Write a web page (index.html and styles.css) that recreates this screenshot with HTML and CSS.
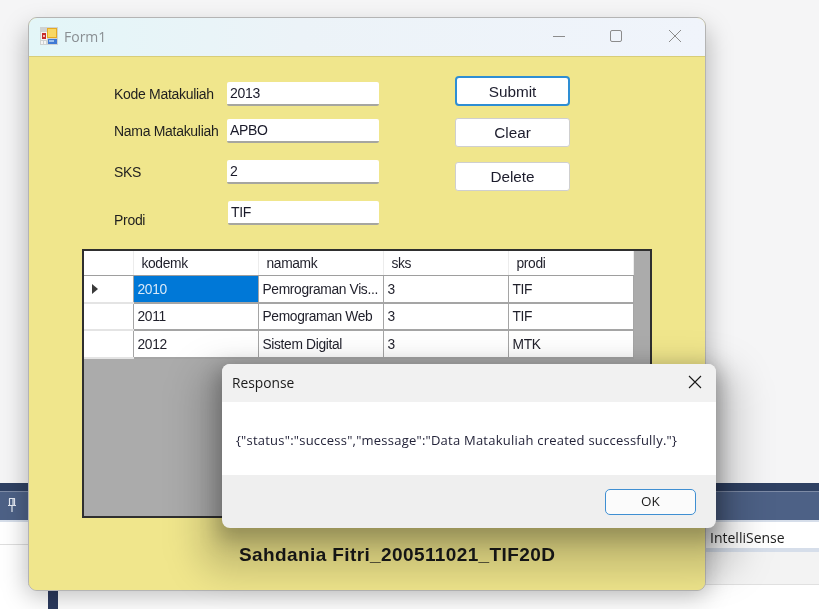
FILE: index.html
```html
<!DOCTYPE html>
<html lang="en">
<head>
<meta charset="utf-8">
<title>Form1</title>
<link rel="stylesheet" href="styles.css">
</head>
<body>
<div class="desktop">
  <div class="ide">
    <div class="ide-band ide-band-top"></div>
    <div class="ide-band ide-band-main">
      <svg class="pin" width="12" height="16" viewBox="0 0 12 16"><path d="M3 1.5h6M3.5 1.5v7h5v-7M2 8.5h8M6 8.5v6.5M7 2v6" fill="none" stroke="#e4e9f2" stroke-width="1.2"/></svg>
    </div>
    <div class="ide-tabs"><span class="ide-tab-label">IntelliSense</span></div>
    <div class="ide-strip"></div>
    <div class="ide-lower"></div>
    <div class="ide-rule"></div>
    <div class="ide-bar"></div>
  </div>

  <div class="form-shadow"></div>
  <section class="form-window">
    <header class="titlebar">
      <svg class="app-icon" width="18" height="18" viewBox="0 0 18 18">
        <rect x="0" y="0" width="18" height="18" fill="#cfd2d2"/>
        <rect x="1" y="5" width="6" height="8" fill="#f2f2f2"/>
        <rect x="2" y="6" width="4" height="6" fill="#c62b2b"/>
        <rect x="3" y="8" width="2" height="2" fill="#f4b5b0"/>
        <rect x="7" y="1" width="10" height="10" fill="#e5aa22"/>
        <rect x="8" y="2" width="8" height="8" fill="#f8d764"/>
        <rect x="8" y="12" width="9" height="5" fill="#3f79d4"/>
        <rect x="9" y="13" width="5" height="2" fill="#9dc0ee"/>
        <rect x="1" y="14" width="2" height="3" fill="#f5f5f5"/>
        <rect x="4" y="14" width="2" height="3" fill="#f5f5f5"/>
      </svg>
      <span class="title-text">Form1</span>
      <div class="win-controls">
        <svg class="win-btn" width="14" height="14" viewBox="0 0 14 14"><path d="M1 7.5h12" stroke="#8c8c8c" stroke-width="1"/></svg>
        <svg class="win-btn" width="14" height="14" viewBox="0 0 14 14"><rect x="0.5" y="1.5" width="11" height="11" rx="1.5" fill="none" stroke="#8c8c8c" stroke-width="1"/></svg>
        <svg class="win-btn" width="14" height="14" viewBox="0 0 14 14"><path d="M1 1l12 12M13 1L1 13" stroke="#8c8c8c" stroke-width="1"/></svg>
      </div>
    </header>

    <div class="form-body">
      <div class="form-top">
        <div class="fields">
          <div class="field field-kode"><label class="field-label">Kode Matakuliah</label><div class="input">2013</div></div>
          <div class="field field-nama"><label class="field-label">Nama Matakuliah</label><div class="input">APBO</div></div>
          <div class="field field-sks"><label class="field-label">SKS</label><div class="input">2</div></div>
          <div class="field field-prodi"><label class="field-label label-low">Prodi</label><div class="input input-inset">TIF</div></div>
        </div>
        <div class="actions">
          <div class="btn btn-focus">Submit</div>
          <div class="btn btn-clear">Clear</div>
          <div class="btn btn-delete">Delete</div>
        </div>
      </div>

      <div class="grid-view">
        <table class="data">
          <colgroup><col class="c-head"><col class="c-col"><col class="c-col"><col class="c-col"><col class="c-col"></colgroup>
          <thead>
            <tr><th></th><th>kodemk</th><th>namamk</th><th>sks</th><th>prodi</th></tr>
          </thead>
          <tbody>
            <tr><td class="row-head"><span class="row-arrow"></span></td><td class="selected">2010</td><td>Pemrograman Vis...</td><td>3</td><td>TIF</td></tr>
            <tr><td class="row-head"></td><td>2011</td><td>Pemograman Web</td><td>3</td><td>TIF</td></tr>
            <tr><td class="row-head"></td><td>2012</td><td>Sistem Digital</td><td>3</td><td>MTK</td></tr>
          </tbody>
        </table>
      </div>

      <p class="signature">Sahdania Fitri_200511021_TIF20D</p>
    </div>
  </section>

  <div class="shadow-near"></div>
  <div class="shadow-far"></div>
  <section class="dialog">
    <header class="dialog-head">
      <span class="dialog-title">Response</span>
      <svg class="dialog-close" width="14" height="14" viewBox="0 0 14 14"><path d="M1 1l12 12M13 1L1 13" stroke="#1a1a1a" stroke-width="1.1"/></svg>
    </header>
    <div class="dialog-content">{"status":"success","message":"Data Matakuliah created successfully."}</div>
    <footer class="dialog-foot"><div class="ok-btn">OK</div></footer>
  </section>
</div>
</body>
</html>
```
FILE: styles.css
```css
* { box-sizing: border-box; }
html, body { margin: 0; padding: 0; }
body { width: 819px; height: 609px; overflow: hidden; background: #f5f5f6; font-family: "Liberation Sans", Arial, sans-serif; }
.desktop { position: relative; width: 819px; height: 609px; overflow: hidden; background: #f5f5f6; filter: blur(0.3px); }

/* window behind */
.ide { position: absolute; left: 0; top: 483px; width: 819px; height: 126px; background: #ffffff; }
.ide-band { position: relative; }
.ide-band-top { height: 9px; background: #2f4163; border-bottom: 1px solid #7d8ba6; }
.ide-band-main { height: 28px; background: #4d6186; }
.pin { position: absolute; left: 6px; top: 5px; }
.ide-tabs { height: 28px; padding-top: 3px; padding-left: 710px; background: #ffffff; border-top: 2px solid #d6deea; font: 14px/26px "Open Sans", "Noto Sans", sans-serif; color: #1e1e1e; }
.ide-tab-label { display: block; font-size: 14px; }
.ide-strip { height: 4px; margin-left: 28px; background: #d6deea; }
.ide-lower { height: 33px; margin-left: 28px; background: #f3f3f3; border-bottom: 1px solid #e0e0e0; }
.ide-rule { position: absolute; left: 0; top: 61px; width: 28px; height: 1px; background: #dedede; }
.ide-bar { position: absolute; left: 48px; top: 107px; width: 10px; height: 19px; background: #2b3a5e; }

/* soft shadows */
.form-shadow { position: absolute; left: 26px; top: 28px; width: 682px; height: 568px; border-radius: 12px; background: rgba(0,0,0,.26); filter: blur(12px); }
.shadow-near { position: absolute; left: 218px; top: 368px; width: 502px; height: 172px; border-radius: 10px; background: rgba(0,0,0,.24); filter: blur(10px); }
.shadow-far { position: absolute; left: 200px; top: 368px; width: 538px; height: 204px; border-radius: 24px; background: rgba(0,0,0,.18); filter: blur(18px); }

/* form window */
.form-window { position: absolute; left: 28px; top: 17px; width: 678px; height: 574px; border: 1px solid #b4b4b4; border-radius: 9px; background: #f0e68c; }
.titlebar { display: flex; align-items: center; height: 39px; padding: 0 23px 2px 11px; border-radius: 8px 8px 0 0; background: linear-gradient(90deg, #e3f6f8 0%, #ecf3f8 40%, #f0f4fb 100%); border-bottom: 1px solid #d8cd78; }
.app-icon { flex: none; margin-right: 6px; }
.title-text { font: 14px "Open Sans", "Noto Sans", sans-serif; color: #8a8f93; }
.win-controls { display: flex; gap: 44px; margin-left: auto; }
.win-btn { display: block; }

.form-body { height: 533px; border-radius: 0 0 8px 8px; background: #f0e68c; overflow: hidden; }
.form-top { display: flex; height: 192px; }
.fields { width: 341px; margin-left: 85px; padding-top: 25px; flex: none; }
.field { display: flex; align-items: center; height: 24px; }
.field-nama { margin-top: 13px; }
.field-sks { margin-top: 17px; }
.field-prodi { margin-top: 17px; }
.field-label { width: 113px; flex: none; font-size: 14px; letter-spacing: -0.3px; color: #1f1f1f; white-space: nowrap; }
.label-low { position: relative; top: 7px; }
.input { width: 152px; height: 24px; padding-left: 3px; background: #ffffff; border-radius: 2px; border-bottom: 2px solid #a6a6a0; font-size: 14px; letter-spacing: -0.3px; line-height: 23px; color: #1a1a2a; }
.input-inset { width: 151px; margin-left: 1px; padding-left: 3px; }
.actions { padding-top: 19px; display: flex; flex-direction: column; }
.btn { width: 115px; height: 29px; background: #ffffff; border: 1px solid #cfcfcf; border-radius: 3px; text-align: center; font-size: 15.3px; line-height: 28px; color: #1c1c2c; }
.btn-focus { border: 2px solid #2e8ed4; line-height: 27px; height: 30px; border-radius: 4px; }
.btn-clear { margin-top: 12px; }
.btn-delete { margin-top: 15px; }

/* grid */
.grid-view { width: 570px; height: 269px; margin-left: 53px; background: #ababab; border: 2px solid #2f2f2f; }
.data { border-collapse: collapse; table-layout: fixed; width: 549px; font-size: 13.8px; letter-spacing: -0.35px; color: #1f1f2a; }
.c-head { width: 49px; }
.c-col { width: 125px; }
.data th { height: 24px; padding: 1px 0 0 8px; background: #ffffff; font-weight: normal; text-align: left; border-right: 1px solid #ececec; border-bottom: 1px solid #9e9e9e; }
.data td { height: 27.5px; padding: 1px 0 0 4px; background: #ffffff; border-right: 1px solid #a5a5a5; border-bottom: 2px solid #a5a5a5; white-space: nowrap; overflow: hidden; }
.data td.row-head { background: #ffffff; border-right: 1px solid #a5a5a5; border-bottom: 2px solid #e4e4e4; }
.data td.selected { background: #0078d7; color: #d8e9f8; }
.row-arrow { display: block; width: 0; height: 0; margin-left: 4px; border-left: 6px solid #3a3a3a; border-top: 5px solid transparent; border-bottom: 5px solid transparent; }

.signature { margin: 28px 0 0 210px; font-size: 19px; font-weight: bold; line-height: 18px; letter-spacing: 0.39px; color: #1a1a1a; white-space: nowrap; }

/* dialog */
.dialog { position: absolute; left: 222px; top: 364px; width: 494px; height: 164px; border-radius: 8px; overflow: hidden; background: #efefef; display: flex; flex-direction: column; }
.dialog-head { height: 38px; flex: none; display: flex; align-items: center; justify-content: space-between; padding: 0 14px 2px 10px; background: #f1f1f1; }
.dialog-title { font: 13.8px "Open Sans", "Noto Sans", sans-serif; color: #1c1c1c; }
.dialog-close { display: block; }
.dialog-content { height: 73px; flex: none; padding: 29px 0 0 14px; background: #ffffff; font: 13px "Open Sans", "Noto Sans", sans-serif; letter-spacing: 0.23px; color: #24243a; white-space: nowrap; }
.dialog-foot { flex: 1; display: flex; justify-content: flex-end; padding: 14px 20px 0 0; }
.ok-btn { width: 91px; height: 26px; background: #fbfbfb; border: 1.5px solid #3f8fd2; border-radius: 5px; text-align: center; font: 13.5px/23px "Open Sans", "Noto Sans", sans-serif; color: #1c1c1c; }
```
